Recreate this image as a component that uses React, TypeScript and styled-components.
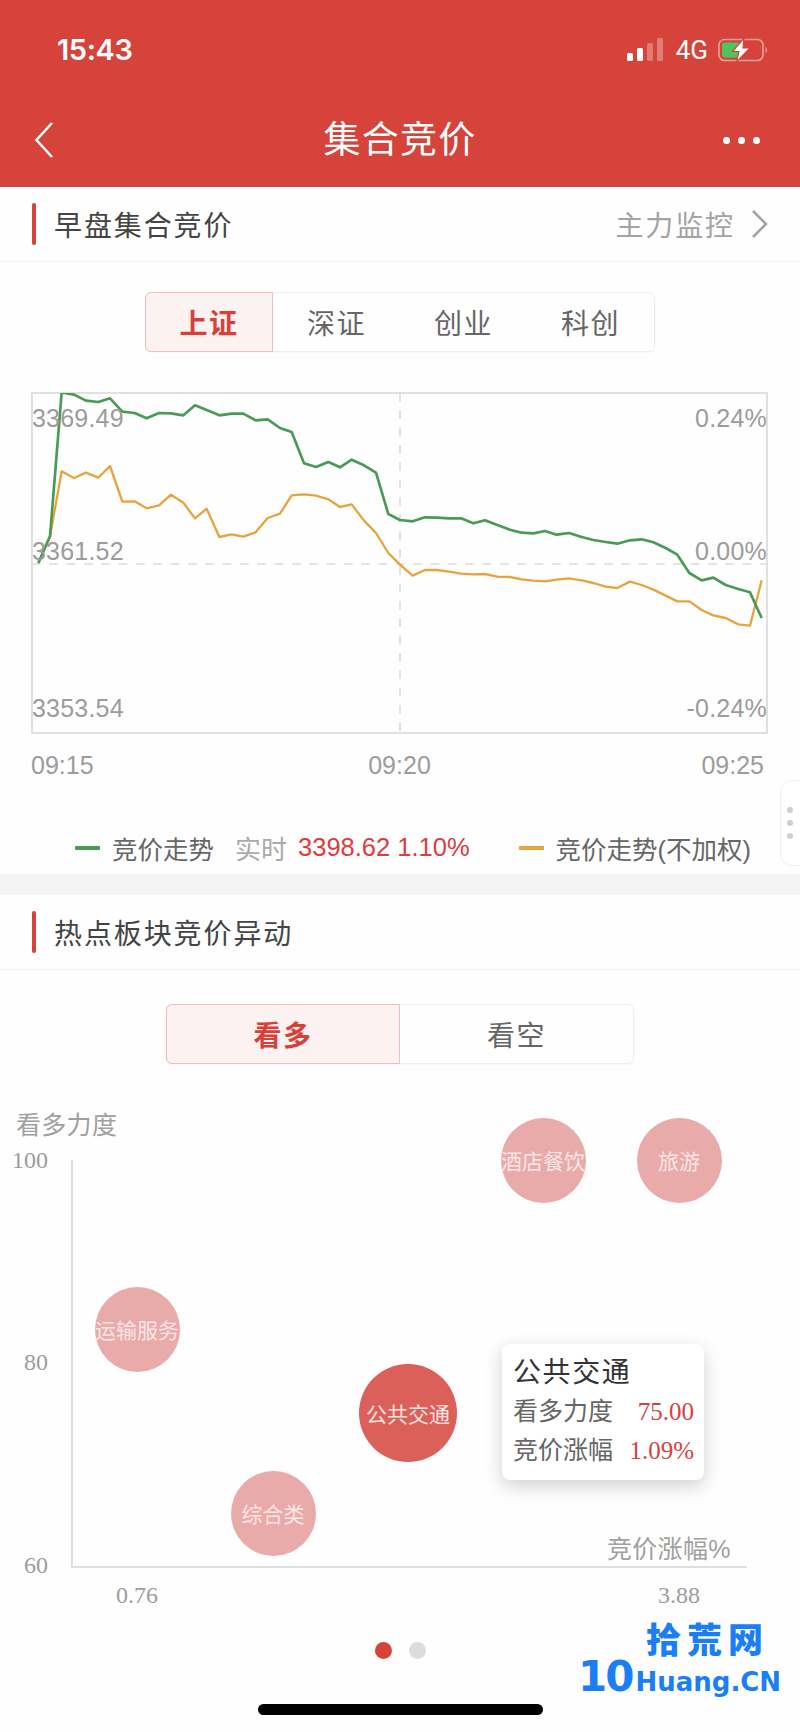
import React from 'react';
import styled, { createGlobalStyle } from 'styled-components';

const RED = '#d5433b';
const SANS = '"Liberation Sans", "Noto Sans CJK SC", sans-serif';
const SERIF = '"Liberation Serif", "Noto Sans CJK SC", serif';

const GlobalStyle = createGlobalStyle`
  html, body {
    margin: 0;
    padding: 0;
    background: #fff;
    font-family: ${SANS};
  }
`;

const Page = styled.div`
  position: relative;
  width: 800px;
  height: 1732px;
  overflow: hidden;
  display: flex;
  flex-direction: column;
  background: #fefefe;
`;

const Header = styled.header`
  height: 187px;
  background: ${RED};
  color: #fff;
  flex-shrink: 0;
`;

const StatusBar = styled.div`
  height: 98px;
  display: flex;
  align-items: center;
  justify-content: space-between;
  padding: 0 30px 0 57px;
`;

const Time = styled.span`
  font-family: Inter, sans-serif;
  font-size: 29px;
  font-weight: 600;
  letter-spacing: -0.4px;
`;

const StatusIcons = styled.div`
  display: flex;
  align-items: center;
  gap: 10px;
  padding-top: 1px;
`;

const SignalBars = styled.svg`
  margin-right: 3px;
`;

const Network = styled.span`
  font-family: Roboto, sans-serif;
  font-size: 26px;
  font-weight: 400;
`;

const NavBar = styled.div`
  height: 84px;
  padding: 0 40px 0 40px;
  display: grid;
  grid-template-columns: 1fr auto 1fr;
  align-items: center;
`;

const BackIcon = styled.svg`
  margin-left: -6px;
`;

const NavTitle = styled.h1`
  margin: 0;
  font-size: 37px;
  font-weight: 400;
  letter-spacing: 1.2px;
  line-height: 1;
`;

const MoreDots = styled.div`
  display: flex;
  justify-content: flex-end;
  gap: 8px;
`;

const MoreDot = styled.i`
  width: 7px;
  height: 7px;
  border-radius: 50%;
  background: #fff;
`;

const SectionRow = styled.div`
  height: 75px;
  box-sizing: border-box;
  flex-shrink: 0;
  display: flex;
  align-items: center;
  padding: 0 32px;
  border-bottom: 1px solid #f1f1f1;
`;

const RedMark = styled.i`
  width: 4px;
  height: 42px;
  border-radius: 2px;
  background: ${RED};
  margin-right: 18px;
`;

const SectionTitle = styled.h2`
  margin: 0;
  flex: 1;
  font-size: 28px;
  font-weight: 400;
  letter-spacing: 1.9px;
  color: #444;
`;

const MonitorLink = styled.a`
  display: flex;
  align-items: center;
  gap: 16px;
  font-size: 28px;
  letter-spacing: 1.9px;
  color: #a3a3a3;
`;

const Segments = styled.div<{ $width: number; $top: number; $count: number }>`
  width: ${p => p.$width}px;
  height: 60px;
  box-sizing: border-box;
  margin: ${p => p.$top}px auto 0;
  flex-shrink: 0;
  display: grid;
  grid-template-columns: repeat(${p => p.$count}, 1fr);
  border: 1px solid #eeeeee;
  border-radius: 6px;
  box-shadow: 0 1px 2px rgba(0, 0, 0, 0.04);
`;

const Segment = styled.div<{ $active?: boolean }>`
  display: flex;
  align-items: center;
  justify-content: center;
  font-size: 28px;
  letter-spacing: 1.4px;
  margin: ${p => (p.$active ? '-1px 0 -1px -1px' : '0')};
  border: ${p => (p.$active ? '1px solid #f0bdbb' : '0')};
  border-radius: ${p => (p.$active ? '6px 0 0 6px' : '0')};
  background: ${p => (p.$active ? '#fbf2f1' : 'transparent')};
  color: ${p => (p.$active ? '#d8403a' : '#666')};
  font-weight: ${p => (p.$active ? 600 : 400)};
`;

const ChartFrame = styled.div`
  position: relative;
  width: 737px;
  height: 342px;
  box-sizing: border-box;
  margin: 40px 0 0 31px;
  flex-shrink: 0;
  border: 2px solid #e0e0e0;
`;

const ChartLines = styled.svg`
  position: absolute;
  left: -1px;
  top: -1px;
  width: 736px;
  height: 341px;
`;

const ChartScale = styled.div`
  position: absolute;
  inset: 0;
  padding-top: 10px;
  display: flex;
  justify-content: space-between;
  font-size: 25px;
  color: #9c9c9c;
`;

const ScaleColumn = styled.div<{ $right?: boolean }>`
  display: flex;
  flex-direction: column;
  text-align: ${p => (p.$right ? 'right' : 'left')};
  margin: ${p => (p.$right ? '0 -1px 0 0' : '0 0 0 -1px')};
  line-height: 28px;
  letter-spacing: 0.2px;
`;

const ScaleValue = styled.span<{ $gap: number }>`
  margin-bottom: ${p => p.$gap}px;
`;

const TimeAxis = styled.div`
  height: 88px;
  flex-shrink: 0;
  padding: 17px 36px 0 31px;
  box-sizing: border-box;
  display: flex;
  justify-content: space-between;
  font-size: 25px;
  line-height: 28px;
  color: #9c9c9c;
`;

const MidTick = styled.span`
  margin-left: 4px;
`;

const Legend = styled.div`
  height: 52px;
  flex-shrink: 0;
  box-sizing: border-box;
  padding-left: 75px;
  display: flex;
  align-items: center;
  font-size: 25.5px;
  color: #666;
  padding-bottom: 1px;
`;

const LegendDash = styled.i<{ $color: string }>`
  width: 25px;
  height: 4px;
  border-radius: 1px;
  background: ${p => p.$color};
  margin-right: 12px;
`;

const LiveLabel = styled.span`
  margin-left: 21px;
  font-size: 26px;
  color: #aaa;
`;

const LiveValue = styled.span`
  margin-left: 11px;
  color: #dc3c41;
  margin-right: 49px;
  white-space: pre;
`;

const Band = styled.div`
  height: 21px;
  flex-shrink: 0;
  background: #f4f4f4;
`;

const SideHandle = styled.div`
  position: absolute;
  top: 780px;
  right: -4px;
  width: 24px;
  height: 86px;
  box-sizing: border-box;
  padding-right: 4px;
  border: 1px solid #efefef;
  border-radius: 12px 0 0 12px;
  background: #fff;
  display: flex;
  flex-direction: column;
  align-items: center;
  justify-content: center;
  gap: 7px;
`;

const HandleDot = styled.i`
  width: 6px;
  height: 6px;
  border-radius: 50%;
  background: #cfcfcf;
`;

const BubbleCanvas = styled.div`
  position: relative;
  height: 566px;
  flex-shrink: 0;
`;

const AxisTitle = styled.span<{ $x: number; $y: number }>`
  position: absolute;
  left: ${p => p.$x}px;
  top: ${p => p.$y}px;
  font-size: 25px;
  line-height: 30px;
  letter-spacing: 0.3px;
  color: #a0a0a0;
  white-space: nowrap;
`;

const YTick = styled.span<{ $y: number }>`
  position: absolute;
  right: 752px;
  top: ${p => p.$y - 14}px;
  font-family: ${SERIF};
  font-size: 24px;
  line-height: 28px;
  color: #9c9c9c;
`;

const XTick = styled.span<{ $x: number }>`
  position: absolute;
  left: ${p => p.$x - 40}px;
  width: 80px;
  top: 517px;
  text-align: center;
  font-family: ${SERIF};
  font-size: 24px;
  line-height: 28px;
  color: #9c9c9c;
`;

const YAxisLine = styled.i`
  position: absolute;
  left: 71px;
  top: 96px;
  width: 2px;
  height: 408px;
  background: #dfdfdf;
`;

const XAxisLine = styled.i`
  position: absolute;
  left: 71px;
  top: 502px;
  width: 676px;
  height: 2px;
  background: #dfdfdf;
`;

const Bubble = styled.div<{ $x: number; $y: number; $r: number; $active?: boolean }>`
  position: absolute;
  left: ${p => p.$x - p.$r}px;
  top: ${p => p.$y - p.$r}px;
  width: ${p => p.$r * 2}px;
  height: ${p => p.$r * 2}px;
  border-radius: 50%;
  background: ${p => (p.$active ? '#dc605a' : '#e9aaaa')};
  color: ${p => (p.$active ? '#fbe3e1' : '#fbe6e6')};
  font-size: 21px;
  white-space: nowrap;
  display: flex;
  align-items: center;
  justify-content: center;
`;

const Tooltip = styled.div`
  position: absolute;
  left: 502px;
  top: 280px;
  width: 202px;
  height: 136px;
  box-sizing: border-box;
  padding: 10px 10px 0 11px;
  border-radius: 8px;
  background: #fff;
  box-shadow: 0 6px 18px rgba(0, 0, 0, 0.18);
`;

const TooltipTitle = styled.div`
  font-size: 28px;
  line-height: 38px;
  letter-spacing: 1.6px;
  color: #333;
`;

const TooltipRow = styled.div`
  display: flex;
  justify-content: space-between;
  font-size: 25px;
  line-height: 39px;
  color: #666;
`;

const TooltipValue = styled.span`
  font-family: ${SERIF};
  color: #d8403f;
`;

const Pager = styled.div`
  height: 40px;
  flex-shrink: 0;
  display: flex;
  align-items: center;
  justify-content: center;
  gap: 17px;
`;

const PagerDot = styled.i<{ $on?: boolean }>`
  width: 17px;
  height: 17px;
  border-radius: 50%;
  background: ${p => (p.$on ? RED : '#dcdcdc')};
`;

const HomeBar = styled.div`
  width: 285px;
  height: 11px;
  margin: 34px auto 0;
  flex-shrink: 0;
  border-radius: 6px;
  background: #000;
`;

const Watermark = styled.div`
  position: absolute;
  left: 578px;
  top: 1618px;
  width: 210px;
  color: #1a7ef5;
  font-weight: 900;
`;

const WatermarkCn = styled.div`
  padding-left: 68px;
  font-size: 35px;
  line-height: 46px;
  letter-spacing: 6px;
`;

const WatermarkEn = styled.div`
  display: flex;
  align-items: baseline;
  gap: 3px;
  margin-top: -8px;
  line-height: 42px;
  font-family: "DejaVu Sans", sans-serif;
  font-weight: 700;
  font-size: 26px;
`;

const WatermarkNum = styled.span`
  font-size: 42px;
  letter-spacing: -2px;
`;

// traced from the reference, one unit = 1/3 px, x starts at the frame's 96
const GREEN = '115,580 150,500 185,68 222,75 258,93 295,97 330,86 367,126 404,130 440,146 477,130 513,131 550,137 585,107 622,122 658,137 695,132 730,132 767,152 803,149 840,175 875,187 912,281 948,292 985,277 1020,293 1055,270 1092,287 1128,309 1165,433 1200,451 1238,455 1275,443 1310,444 1347,446 1383,446 1420,461 1455,452 1492,466 1530,480 1565,489 1600,491 1635,484 1670,495 1707,490 1745,502 1780,511 1817,517 1852,522 1890,512 1925,509 1960,518 1997,535 2032,555 2068,610 2105,632 2140,624 2177,646 2215,658 2250,668 2285,745';
const ORANGE = '115,580 150,500 185,305 222,325 258,309 295,324 330,289 367,396 404,395 440,416 477,407 513,375 550,399 585,446 620,417 658,502 695,494 730,501 767,488 803,445 840,432 875,377 912,374 948,378 985,389 1020,412 1055,404 1092,453 1128,490 1165,550 1200,585 1238,618 1275,601 1310,601 1347,606 1383,612 1420,614 1455,613 1492,621 1530,622 1565,629 1600,633 1635,635 1670,630 1707,626 1745,632 1780,640 1817,651 1852,655 1890,636 1925,646 1960,660 1997,678 2032,695 2068,695 2105,721 2140,737 2177,745 2215,764 2250,768 2285,632';

const bubbles = [
  { name: '运输服务', x: 137, y: 265, r: 42.5 },
  { name: '酒店餐饮', x: 543, y: 96, r: 42.5 },
  { name: '旅游', x: 679, y: 96, r: 42.5 },
  { name: '公共交通', x: 408, y: 349, r: 49, active: true },
  { name: '综合类', x: 273, y: 449, r: 42.5 },
];

const Section = ({ title, children }: { title: string; children?: React.ReactNode }) => (
  <SectionRow>
    <RedMark />
    <SectionTitle>{title}</SectionTitle>
    {children}
  </SectionRow>
);

const App: React.FC = () => {
  return (
    <Page>
      <GlobalStyle />
      <Header>
        <StatusBar>
          <Time>15:43</Time>
          <StatusIcons>
            <SignalBars width="36" height="23" viewBox="0 0 36 23">
              <rect x="0" y="15" width="6" height="8" rx="1.5" fill="#fff" />
              <rect x="10" y="10" width="6" height="13" rx="1.5" fill="#fff" />
              <rect x="20" y="5" width="6" height="18" rx="1.5" fill="#fff" opacity="0.3" />
              <rect x="30" y="0" width="6" height="23" rx="1.5" fill="#fff" opacity="0.3" />
            </SignalBars>
            <Network>4G</Network>
            <svg width="52" height="24" viewBox="0 0 52 24">
              <rect x="1" y="1.5" width="44" height="21" rx="5.5" fill="none" stroke="#fff" strokeOpacity="0.5" strokeWidth="1.6" />
              <rect x="4" y="4.5" width="20" height="15" rx="3" fill="#4ec45c" />
              <path d="M26 0 L14.5 13.5 L21 13.5 L18.5 24 L32 10 L25 10 Z" fill="#fff" stroke={RED} strokeWidth="1.2" />
              <path d="M47.5 9 C49.5 9.5 49.5 14.5 47.5 15 Z" fill="#fff" fillOpacity="0.5" />
            </svg>
          </StatusIcons>
        </StatusBar>
        <NavBar>
          <BackIcon width="20" height="36" viewBox="0 0 20 36">
            <path d="M18 1 L2.5 18 L18 35" fill="none" stroke="#fff" strokeWidth="2.5" />
          </BackIcon>
          <NavTitle>集合竞价</NavTitle>
          <MoreDots>
            <MoreDot />
            <MoreDot />
            <MoreDot />
          </MoreDots>
        </NavBar>
      </Header>

      <Section title="早盘集合竞价">
        <MonitorLink>
          主力监控
          <svg width="17" height="30" viewBox="0 0 17 30">
            <path d="M2 2 L15 15 L2 28" fill="none" stroke="#a3a3a3" strokeWidth="2.6" />
          </svg>
        </MonitorLink>
      </Section>

      <Segments $width={510} $top={30} $count={4}>
        <Segment $active>上证</Segment>
        <Segment>深证</Segment>
        <Segment>创业</Segment>
        <Segment>科创</Segment>
      </Segments>

      <ChartFrame>
        <ChartLines viewBox="96 70 2208 1023">
          <line x1="96" y1="583" x2="2304" y2="583" stroke="#dcdcdc" strokeWidth="5" strokeDasharray="26 26" />
          <line x1="1200" y1="70" x2="1200" y2="1092" stroke="#dcdcdc" strokeWidth="5" strokeDasharray="26 26" />
          <polyline points={ORANGE} fill="none" stroke="#e6a43f" strokeWidth="7" strokeLinejoin="round" />
          <polyline points={GREEN} fill="none" stroke="#4a9a55" strokeWidth="8" strokeLinejoin="round" />
        </ChartLines>
        <ChartScale>
          <ScaleColumn>
            <ScaleValue $gap={105}>3369.49</ScaleValue>
            <ScaleValue $gap={129}>3361.52</ScaleValue>
            <ScaleValue $gap={0}>3353.54</ScaleValue>
          </ScaleColumn>
          <ScaleColumn $right>
            <ScaleValue $gap={105}>0.24%</ScaleValue>
            <ScaleValue $gap={129}>0.00%</ScaleValue>
            <ScaleValue $gap={0}>-0.24%</ScaleValue>
          </ScaleColumn>
        </ChartScale>
      </ChartFrame>

      <TimeAxis>
        <span>09:15</span>
        <MidTick>09:20</MidTick>
        <span>09:25</span>
      </TimeAxis>

      <Legend>
        <LegendDash $color="#4a9a55" />
        竞价走势
        <LiveLabel>实时</LiveLabel>
        <LiveValue>3398.62 1.10%</LiveValue>
        <LegendDash $color="#e6a43f" />
        竞价走势(不加权)
      </Legend>

      <Band />

      <Section title="热点板块竞价异动" />

      <Segments $width={468} $top={34} $count={2}>
        <Segment $active>看多</Segment>
        <Segment>看空</Segment>
      </Segments>

      <BubbleCanvas>
        <AxisTitle $x={16} $y={46}>看多力度</AxisTitle>
        <YTick $y={96}>100</YTick>
        <YTick $y={298}>80</YTick>
        <YTick $y={501}>60</YTick>
        <YAxisLine />
        <XAxisLine />
        <AxisTitle $x={607} $y={470}>竞价涨幅%</AxisTitle>
        <XTick $x={137}>0.76</XTick>
        <XTick $x={679}>3.88</XTick>
        {bubbles.map(b => (
          <Bubble key={b.name} $x={b.x} $y={b.y} $r={b.r} $active={b.active}>
            {b.name}
          </Bubble>
        ))}
        <Tooltip>
          <TooltipTitle>公共交通</TooltipTitle>
          <TooltipRow>
            <span>看多力度</span>
            <TooltipValue>75.00</TooltipValue>
          </TooltipRow>
          <TooltipRow>
            <span>竞价涨幅</span>
            <TooltipValue>1.09%</TooltipValue>
          </TooltipRow>
        </Tooltip>
      </BubbleCanvas>

      <Pager>
        <PagerDot $on />
        <PagerDot />
      </Pager>
      <HomeBar />

      <SideHandle>
        <HandleDot />
        <HandleDot />
        <HandleDot />
      </SideHandle>

      <Watermark>
        <WatermarkCn>拾荒网</WatermarkCn>
        <WatermarkEn>
          <WatermarkNum>10</WatermarkNum>
          Huang.CN
        </WatermarkEn>
      </Watermark>
    </Page>
  );
};

export default App;
